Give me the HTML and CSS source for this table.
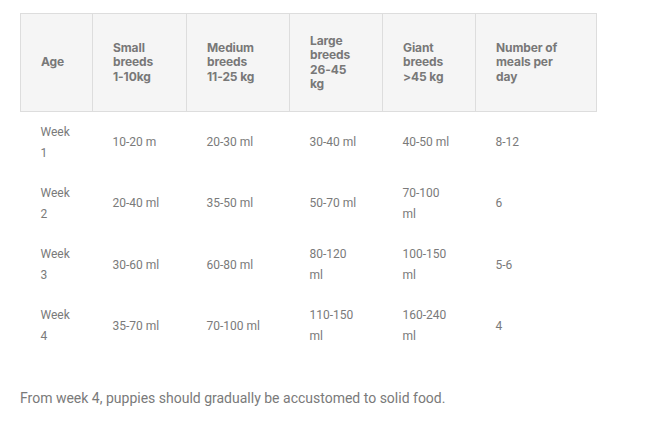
FILE: index.html
```html
<!DOCTYPE html>
<html>
<head>
<meta charset="utf-8">
<link rel="stylesheet" href="styles.css">
</head>
<body>
<div class="page">
<table class="feed">
  <colgroup>
    <col class="c1"><col class="c2"><col class="c3"><col class="c4"><col class="c5"><col class="c6">
  </colgroup>
  <thead>
    <tr>
      <th>Age</th>
      <th>Small<br>breeds<br>1-10kg</th>
      <th>Medium<br>breeds<br>11-25 kg</th>
      <th>Large<br>breeds<br>26-45<br>kg</th>
      <th>Giant<br>breeds<br>&gt;45 kg</th>
      <th>Number of<br>meals per<br>day</th>
    </tr>
  </thead>
  <tbody>
    <tr><td>Week 1</td><td>10-20 m</td><td>20-30 ml</td><td>30-40 ml</td><td>40-50 ml</td><td>8-12</td></tr>
    <tr><td>Week 2</td><td>20-40 ml</td><td>35-50 ml</td><td>50-70 ml</td><td>70-100 ml</td><td>6</td></tr>
    <tr><td>Week 3</td><td>30-60 ml</td><td>60-80 ml</td><td>80-120 ml</td><td>100-150 ml</td><td>5-6</td></tr>
    <tr><td>Week 4</td><td>35-70 ml</td><td>70-100 ml</td><td>110-150 ml</td><td>160-240 ml</td><td>4</td></tr>
  </tbody>
</table>
<p class="note">From week 4, puppies should gradually be accustomed to solid food.</p>
</div>
</body>
</html>
```
FILE: styles.css
```css
html, body { margin: 0; padding: 0; background: #fff; }
.page { padding: 13px 20px 0 20px; }
.feed {
  border-collapse: collapse;
  table-layout: fixed;
  width: 576px;
}
.c1 { width: 72px; }
.c2 { width: 94px; }
.c3 { width: 103px; }
.c4 { width: 93px; }
.c5 { width: 93px; }
.c6 { width: 121px; }
.feed th {
  background: #f5f5f5;
  border: 1px solid #dddddd;
  font-family: Inter, "Open Sans", sans-serif;
  font-weight: 700;
  font-size: 12px;
  line-height: 14.5px;
  color: #787878;
  text-align: left;
  vertical-align: middle;
  padding: 19.5px 20px;
  letter-spacing: -0.1px;
}
.feed td {
  font-family: Roboto, "Liberation Sans", sans-serif;
  font-size: 12px;
  line-height: 21px;
  color: #7a7a7a;
  vertical-align: middle;
  padding: 9.65px 20px;
}
.note {
  font-family: Roboto, "Liberation Sans", sans-serif;
  font-size: 14px;
  color: #7a7a7a;
  margin: 31px 0 0 0;
  line-height: 20px;
}
```
